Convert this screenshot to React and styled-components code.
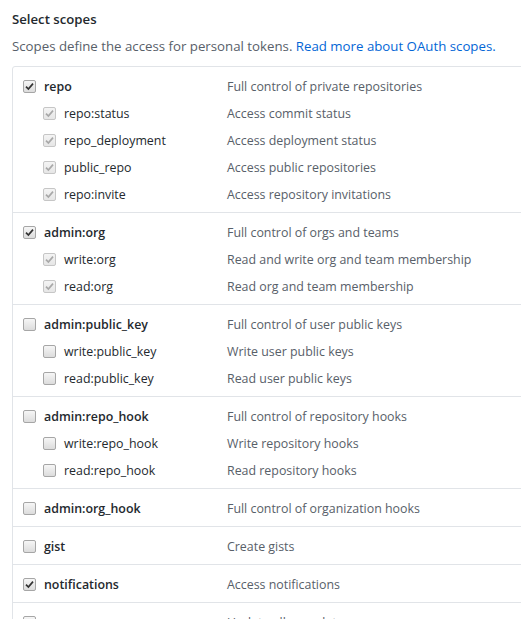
import React from "react";
import styled, { createGlobalStyle } from "styled-components";

const GlobalStyle = createGlobalStyle`
  html, body {
    margin: 0;
    padding: 0;
    background: #fff;
    overflow: hidden;
  }
  body {
    font-family: "Open Sans", "Noto Sans", sans-serif;
    color: #24292e;
  }
`;

const scopes = [
  {
    name: "repo",
    desc: "Full control of private repositories",
    checked: true,
    children: [
      { name: "repo:status", desc: "Access commit status" },
      { name: "repo_deployment", desc: "Access deployment status" },
      { name: "public_repo", desc: "Access public repositories" },
      { name: "repo:invite", desc: "Access repository invitations" },
    ],
  },
  {
    name: "admin:org",
    desc: "Full control of orgs and teams",
    checked: true,
    children: [
      { name: "write:org", desc: "Read and write org and team membership" },
      { name: "read:org", desc: "Read org and team membership" },
    ],
  },
  {
    name: "admin:public_key",
    desc: "Full control of user public keys",
    children: [
      { name: "write:public_key", desc: "Write user public keys" },
      { name: "read:public_key", desc: "Read user public keys" },
    ],
  },
  {
    name: "admin:repo_hook",
    desc: "Full control of repository hooks",
    children: [
      { name: "write:repo_hook", desc: "Write repository hooks" },
      { name: "read:repo_hook", desc: "Read repository hooks" },
    ],
  },
  { name: "admin:org_hook", desc: "Full control of organization hooks" },
  { name: "gist", desc: "Create gists" },
  { name: "notifications", desc: "Access notifications", checked: true },
  { name: "user", desc: "Update all user data" },
];

function CheckBox({ checked, disabled }) {
  return (
    <Box $disabled={disabled}>
      {checked && (
        <svg width="9" height="9" viewBox="0 0 9 9">
          <path
            d="M1 4.6 L3.4 7 L8 1.6"
            fill="none"
            stroke={disabled ? "#a8a8a8" : "#333"}
            strokeWidth="1.7"
          />
        </svg>
      )}
    </Box>
  );
}

export default function App() {
  return (
    <Page>
      <GlobalStyle />
      <Title>Select scopes</Title>
      <Note>
        Scopes define the access for personal tokens.{" "}
        <Link href="#">Read more about OAuth scopes.</Link>
      </Note>
      <List>
        {scopes.map((s) => (
          <Group key={s.name}>
            <Row>
              <Label $bold>
                <CheckBox checked={s.checked} />
                {s.name}
              </Label>
              <Desc>{s.desc}</Desc>
            </Row>
            {(s.children || []).map((c) => (
              <Row key={c.name} $sub>
                <Label>
                  <CheckBox checked={s.checked} disabled={s.checked} />
                  {c.name}
                </Label>
                <Desc>{c.desc}</Desc>
              </Row>
            ))}
          </Group>
        ))}
      </List>
    </Page>
  );
}

const Page = styled.div`
  padding: 9px 0 0 12px;
  width: 540px;
`;

const Title = styled.div`
  font-size: 13.2px;
  font-weight: 600;
  line-height: 20px;
`;

const Note = styled.p`
  margin: 7px 0 0;
  font-size: 13.25px;
  line-height: 20px;
  color: #586069;
`;

const Link = styled.a`
  color: #0366d6;
  text-decoration: none;
`;

const List = styled.div`
  margin-top: 10px;
  border: 1px solid #e1e4e8;
  border-radius: 3px;
`;

const Group = styled.div`
  padding: 5px 0;
  & + & {
    border-top: 1px solid #e1e4e8;
  }
`;

const Row = styled.div`
  display: grid;
  grid-template-columns: ${(p) => (p.$sub ? "184px" : "204px")} 1fr;
  align-items: center;
  box-sizing: border-box;
  height: 27px;
  padding-top: 1px;
  padding-left: ${(p) => (p.$sub ? "30px" : "10px")};
`;

const Label = styled.label`
  display: flex;
  align-items: center;
  gap: 8px;
  font-size: 12.4px;
  font-weight: ${(p) => (p.$bold ? 600 : 400)};
  color: #24292e;
`;

const Desc = styled.span`
  font-size: 12.4px;
  color: #586069;
`;

const Box = styled.span`
  display: inline-flex;
  align-items: center;
  justify-content: center;
  box-sizing: border-box;
  width: 13px;
  height: 13px;
  border: 1px solid ${(p) => (p.$disabled ? "#c6c6c6" : "#a6a6a6")};
  border-radius: 2px;
  background: ${(p) =>
    p.$disabled
      ? "linear-gradient(#f4f4f4, #e6e6e6)"
      : "linear-gradient(#f6f6f6, #dcdcdc)"};
`;
